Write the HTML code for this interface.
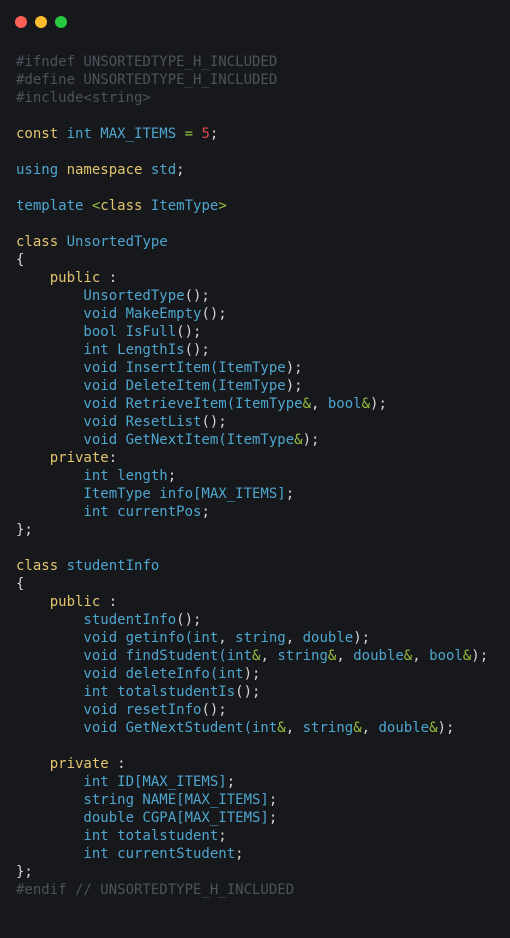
<!DOCTYPE html>
<html><head><meta charset="utf-8"><style>
html,body{margin:0;padding:0;background:#17181b;width:510px;height:938px;overflow:hidden}
.dots{position:absolute;top:16px;left:15px}
.dots span{position:absolute;top:0;width:12px;height:12px;border-radius:50%}
pre{position:absolute;left:16px;top:53px;margin:0;font-family:"DejaVu Sans Mono","Liberation Mono",monospace;font-size:14px;line-height:18px;color:#4ea6cf}
.y{color:#e2c56f}.g{color:#97c13f}.w{color:#d4d4d4}.r{color:#e0464e}.c{color:#4b535c}
</style></head><body>
<div class="dots"><span style="left:0;background:#ff5f57"></span><span style="left:20px;background:#febc2e"></span><span style="left:40px;background:#28c840"></span></div>
<pre><span class="c">#ifndef UNSORTEDTYPE_H_INCLUDED
#define UNSORTEDTYPE_H_INCLUDED
#include&lt;string&gt;</span>

<span class="y">const</span> int MAX_ITEMS <span class="g">=</span> <span class="r">5</span><span class="w">;</span>

using <span class="y">namespace</span> std<span class="w">;</span>

template <span class="g">&lt;</span><span class="y">class</span> ItemType<span class="g">&gt;</span>

<span class="y">class</span> UnsortedType
<span class="w">{</span>
    <span class="y">public</span> <span class="w">:</span>
        UnsortedType<span class="w">();</span>
        void MakeEmpty<span class="w">();</span>
        bool IsFull<span class="w">();</span>
        int LengthIs<span class="w">();</span>
        void InsertItem(ItemType<span class="w">);</span>
        void DeleteItem(ItemType<span class="w">);</span>
        void RetrieveItem(ItemType<span class="g">&amp;</span><span class="w">,</span> bool<span class="g">&amp;</span><span class="w">);</span>
        void ResetList<span class="w">();</span>
        void GetNextItem(ItemType<span class="g">&amp;</span><span class="w">);</span>
    <span class="y">private</span><span class="w">:</span>
        int length<span class="w">;</span>
        ItemType info[MAX_ITEMS]<span class="w">;</span>
        int currentPos<span class="w">;</span>
<span class="w">};</span>

<span class="y">class</span> studentInfo
<span class="w">{</span>
    <span class="y">public</span> <span class="w">:</span>
        studentInfo<span class="w">();</span>
        void getinfo(int<span class="w">,</span> string<span class="w">,</span> double<span class="w">);</span>
        void findStudent(int<span class="g">&amp;</span><span class="w">,</span> string<span class="g">&amp;</span><span class="w">,</span> double<span class="g">&amp;</span><span class="w">,</span> bool<span class="g">&amp;</span><span class="w">);</span>
        void deleteInfo(int<span class="w">);</span>
        int totalstudentIs<span class="w">();</span>
        void resetInfo<span class="w">();</span>
        void GetNextStudent(int<span class="g">&amp;</span><span class="w">,</span> string<span class="g">&amp;</span><span class="w">,</span> double<span class="g">&amp;</span><span class="w">);</span>

    <span class="y">private</span> <span class="w">:</span>
        int ID[MAX_ITEMS]<span class="w">;</span>
        string NAME[MAX_ITEMS]<span class="w">;</span>
        double CGPA[MAX_ITEMS]<span class="w">;</span>
        int totalstudent<span class="w">;</span>
        int currentStudent<span class="w">;</span>
<span class="w">};</span>
<span class="c">#endif // UNSORTEDTYPE_H_INCLUDED</span></pre>
</body></html>
